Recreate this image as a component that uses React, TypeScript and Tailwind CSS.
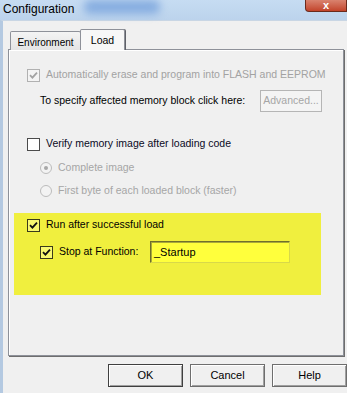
import { ReactNode } from "react";

const FONT = "font-['Tahoma','Liberation_Sans',sans-serif]";

function Check({
  on,
  disabled,
  tint,
}: {
  on?: boolean;
  disabled?: boolean;
  tint?: boolean;
}) {
  const box = disabled
    ? "border-[#b1b1b1] bg-[#f4f4f4]"
    : tint
      ? "border-[#3a3a1a] bg-[#f8f870]"
      : "border-[#4b4b4b] bg-white";
  return (
    <span
      className={`flex h-[13px] w-[13px] shrink-0 items-center justify-center border ${box}`}
    >
      {on && (
        <svg width="9" height="9" viewBox="0 0 9 9">
          <path
            d="M1 4.2 L3.4 6.6 L8 1.6"
            fill="none"
            stroke={disabled ? "#a3a3a3" : "#111"}
            strokeWidth="1.8"
          />
        </svg>
      )}
    </span>
  );
}

function Radio({ on }: { on?: boolean }) {
  return (
    <span className="flex h-[12px] w-[12px] shrink-0 items-center justify-center rounded-full border border-[#bcbcbc] bg-[#f3f3f3]">
      {on && <span className="h-[4px] w-[4px] rounded-full bg-[#a8a8a8]" />}
    </span>
  );
}

function Row({
  children,
  className = "",
}: {
  children: ReactNode;
  className?: string;
}) {
  return (
    <div className={`flex h-[16px] items-center whitespace-nowrap ${className}`}>
      {children}
    </div>
  );
}

function Btn({ label, def }: { label: string; def?: boolean }) {
  return (
    <button
      className={`h-[23px] w-[75px] border bg-[#f0f0f0] text-[11px] text-black shadow-[inset_1px_1px_0_#ffffff,inset_-1px_-1px_0_#a0a0a0] ${
        def ? "border-[#404040]" : "border-[#6e6e6e]"
      }`}
    >
      {label}
    </button>
  );
}

export default function App() {
  return (
    <div className={`${FONT} flex h-[393px] w-[347px] flex-col overflow-hidden bg-[#f0f0f0] text-[10.5px] text-black`}>
      {/* title bar */}
      <div className="flex h-[20px] shrink-0 items-start bg-gradient-to-b from-[#c6dcf2] to-[#bcd3ec]">
        <span className="ml-[3px] mt-[1px] font-['Liberation_Sans',sans-serif] text-[12px] leading-[16px] text-black">
          Configuration
        </span>
        <span className="ml-[10px] mt-0 h-[14px] w-[76px] rounded-[6px] bg-[#86ade0] blur-[4px]" />
        <span className="ml-auto flex h-[12px] w-[42px] items-end justify-center rounded-bl-[4px] border border-t-0 border-[#6b2a1c] bg-gradient-to-b from-[#d9826e] to-[#c2432a] text-[11px] font-bold leading-[11px] text-white">
          x
        </span>
      </div>

      <div className="flex flex-1 flex-col border-l-[3px] border-t border-l-[#b4c9e1] border-t-[#c9d6e4]">
        {/* tabs */}
        <div className="relative z-10 ml-[7px] mt-[8px] -mb-px flex h-[21px] items-end">
          <div className="flex h-[19px] w-[71px] items-center justify-center rounded-t-[2px] border border-b-0 border-[#8e9199] bg-gradient-to-b from-[#f4f4f4] to-[#e4e4e4] pt-[2px] text-[10px]">
            Environment
          </div>
          <div className="-ml-px flex h-[21px] w-[45px] items-start justify-center rounded-t-[2px] border border-b-0 border-[#8e9199] bg-[#f7f7f7] pt-[3px] shadow-[1px_0_0_#5f6168]">
            Load
          </div>
        </div>

        {/* panel */}
        <div className="ml-[5px] flex h-[307px] w-[336px] flex-col border border-[#8e9199] bg-[#f0f0f0] shadow-[inset_1px_1px_0_#ffffff,1px_1px_0_#6e6e6e]">
          <Row className="ml-[18px] mt-[17px] gap-[6px] text-[#a2a2a2]">
            <Check on disabled />
            <span>Automatically erase and program into FLASH and EEPROM</span>
          </Row>

          <div className="ml-[31px] mt-[7px] flex h-[22px] items-center whitespace-nowrap">
            <span className="w-[220px]">To specify affected memory block click here:</span>
            <span className="flex h-[22px] w-[62px] items-center justify-center border border-[#b5b5b5] bg-[#f4f4f4] text-[#a6a6a6]">
              Advanced...
            </span>
          </div>

          <Row className="ml-[18px] mt-[24px] gap-[6px] text-[#0a0a1e]">
            <Check />
            <span>Verify memory image after loading code</span>
          </Row>
          <Row className="ml-[31px] mt-[8px] gap-[6px] text-[#a6a6a6]">
            <Radio on />
            <span>Complete image</span>
          </Row>
          <Row className="ml-[31px] mt-[7px] gap-[6px] text-[#a6a6a6]">
            <Radio />
            <span>First byte of each loaded block (faster)</span>
          </Row>

          {/* highlighted area */}
          <div className="ml-[5px] mt-[14px] flex h-[82px] w-[307px] flex-col bg-[#f0ef3e] pl-[13px] pt-[4px]">
            <Row className="gap-[6px]">
              <Check on tint />
              <span>Run after successful load</span>
            </Row>
            <div className="ml-[13px] mt-[8px] flex h-[22px] items-center whitespace-nowrap">
              <Check on tint />
              <span className="ml-[6px] w-[91px]">Stop at Function:</span>
              <div className="flex h-[22px] w-[140px] items-center border border-[#6f6f2c] border-b-[#d8d84a] border-r-[#d8d84a] bg-[#ffff3c] pl-[3px] text-[11px] shadow-[inset_1px_1px_0_#a9a93a]">
                _Startup
              </div>
            </div>
          </div>
        </div>

        {/* buttons */}
        <div className="ml-[105px] mt-[8px] flex gap-[7px]">
          <Btn label="OK" def />
          <Btn label="Cancel" />
          <Btn label="Help" />
        </div>
      </div>
    </div>
  );
}
